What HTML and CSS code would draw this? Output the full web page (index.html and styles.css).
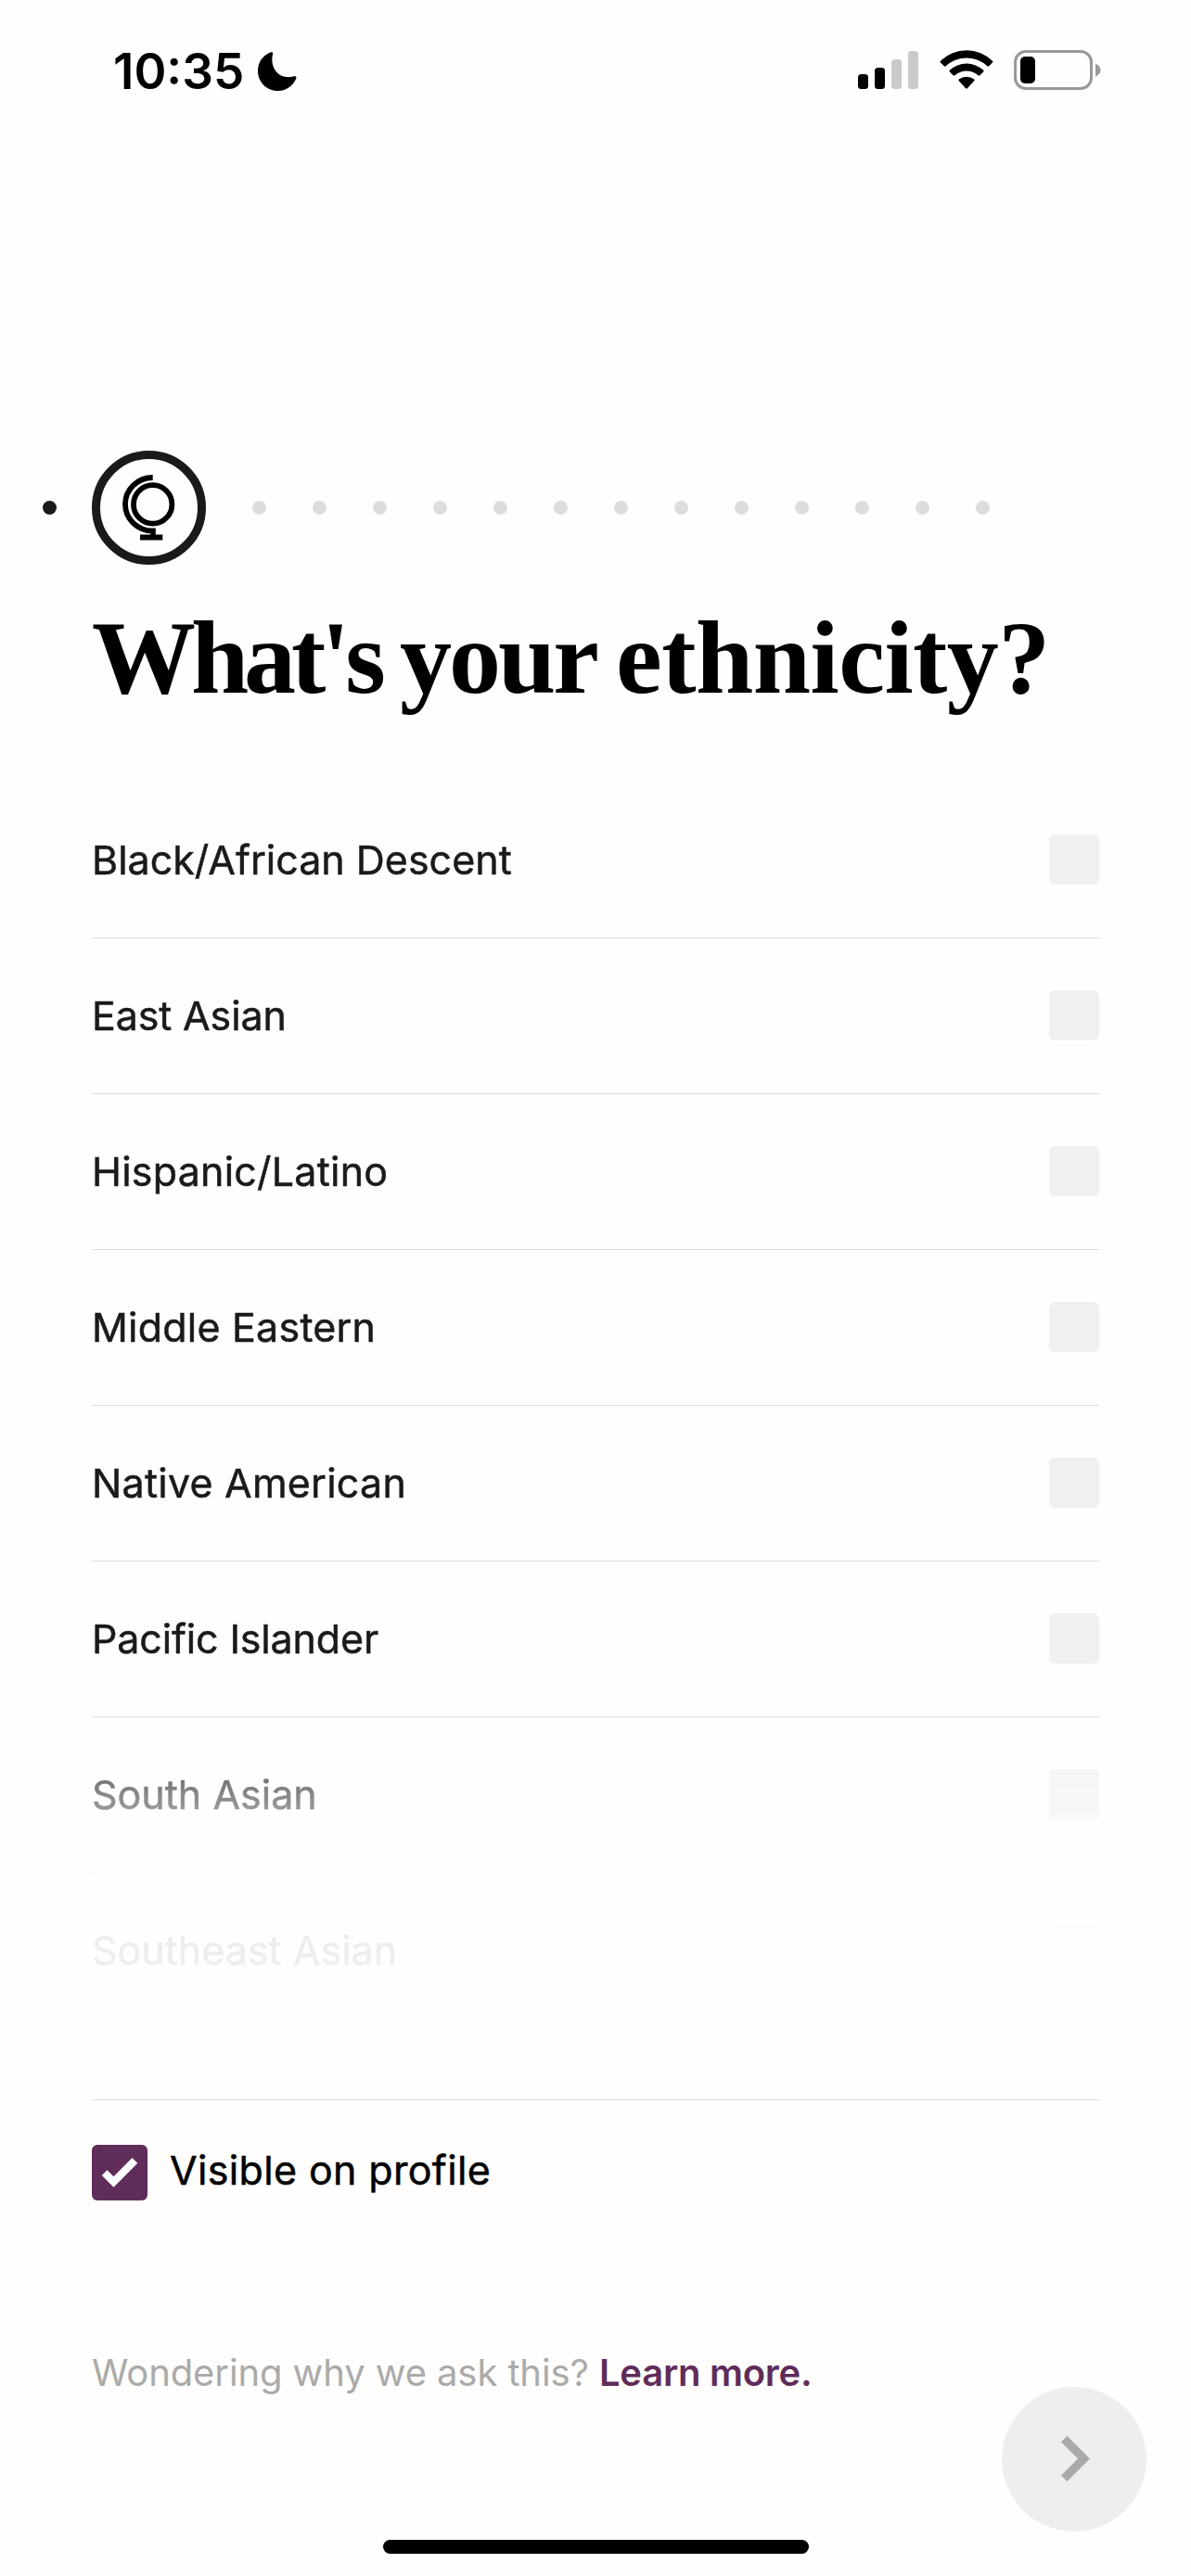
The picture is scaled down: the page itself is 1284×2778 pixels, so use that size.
FILE: index.html
```
<!DOCTYPE html>
<html lang="en">
<head>
<meta charset="utf-8">
<title>What's your ethnicity?</title>
<link rel="stylesheet" href="styles.css">
</head>
<body>
<div class="screen">
  <header class="status">
    <div class="clock">
      <span class="time">10:35</span>
      <svg class="moon" width="42" height="42" viewBox="0 0 42 42"><path d="M13.5 0.5C15.5-.3 16.600.6 16 2.500C13 15 20 27.200 33 27.200C35.500 27.200 37 26.800 39 26.300C41 25.900 42 27 41 29.200C37.500 37 30 42 21.500 42C9.500 42 0 32.500 0 20.500C0 11.500 5 3.800 13.500.5Z"/></svg>
    </div>
    <div class="indicators">
      <svg class="signal" width="65" height="41" viewBox="0 0 65 41"><rect y="25" width="11" height="16" rx="3.500"/><rect x="18" y="18" width="11" height="23" rx="3.500"/><g fill="#cbcac9"><rect x="36" y="9" width="11" height="32" rx="3.500"/><rect x="54" width="11" height="41" rx="3.500"/></g></svg>
      <svg class="wifi" width="58" height="42" viewBox="0 0 58 42"><path d="M1 11.800A39.500 39.500 0 0 1 57 11.800Q57.800 12.700 57 13.500L53.200 17.300Q52.300 18 51.400 17.300A32.600 32.600 0 0 0 6.600 17.300Q5.700 18 4.800 17.300L1 13.500Q.2 12.700 1 11.800Z"/><path d="M10.800 21.800A26.500 26.500 0 0 1 47.200 21.800Q48 22.700 47.200 23.500L43.300 27.300Q42.500 28 41.600 27.300A19 19 0 0 0 16.400 27.300Q15.500 28 14.700 27.300L10.800 23.500Q10 22.700 10.800 21.800Z"/><path d="M20.700 31.600A13.500 13.500 0 0 1 37.300 31.600Q38 32.500 37.200 33.300L29.900 41.200Q29 42 28.100 41.200L20.800 33.300Q20 32.500 20.700 31.600Z"/></svg>
      <svg class="battery" width="95" height="43" viewBox="0 0 95 43"><rect x="1.500" y="1.500" width="82" height="40" rx="11.500" fill="none" stroke="#999" stroke-width="3"/><rect x="7" y="7" width="16" height="29" rx="5"/><path d="M88 14.500Q93.500 17 93.500 21.500T88 28.500Z" fill="#999"/></svg>
    </div>
  </header>

  <nav class="steps">
    <i class="dot done"></i>
    <span class="current"><svg width="58" height="74" viewBox="0 0 58 74" fill="none" stroke="#000" stroke-width="5.800"><circle cx="32.700" cy="32.900" r="20.700"/><path d="M32.700 4A29.700 28.800 0 0 0 32.700 61.600M32.900 58.500V68M19 68.500H43.300"/></svg></span>
    <i class="dot"></i><i class="dot"></i><i class="dot"></i><i class="dot"></i><i class="dot"></i><i class="dot"></i><i class="dot"></i><i class="dot"></i><i class="dot"></i><i class="dot"></i><i class="dot"></i><i class="dot"></i><i class="dot"></i>
  </nav>

  <h1 class="title"><span class="what">What's</span> <span class="your">your</span> <span class="ethnicity">ethnicity?</span></h1>

  <ul class="options">
    <li class="option"><span>Black/African Descent</span><i class="box"></i></li>
    <li class="option"><span class="tight">East Asian</span><i class="box"></i></li>
    <li class="option"><span class="loose">Hispanic/Latino</span><i class="box"></i></li>
    <li class="option"><span class="loose">Middle Eastern</span><i class="box"></i></li>
    <li class="option"><span class="loose">Native American</span><i class="box"></i></li>
    <li class="option"><span class="tight">Pacific Islander</span><i class="box"></i></li>
    <li class="option"><span>South Asian</span><i class="box"></i></li>
    <li class="option"><span>Southeast Asian</span><i class="box"></i></li>
  </ul>

  <div class="visibility">
    <span class="checked"><svg width="40" height="32" viewBox="0 0 40 32"><path d="M0.800 19L6.500 13.200L13.500 20.200L33.500 0L39.300 5.800L13.500 31.800Z" fill="#fff"/></svg></span>
    <span class="visible">Visible on profile</span>
  </div>

  <footer class="footer">
    <p class="why"><span class="ask">Wondering why we ask this?</span><a class="more">Learn more.</a></p>
    <span class="next"><svg width="32" height="50" viewBox="0 0 32 50"><path d="M0 6.500L6.500 0L31 24.500L6.500 49L0 42.500L18 24.500Z" fill="#aaa"/></svg></span>
  </footer>
  <div class="home"></div>
</div>
</body>
</html>
```
FILE: styles.css
```
* { box-sizing: border-box; margin: 0; padding: 0; }
body { background: #fffefc; color: #1a1a1a; font-family: Inter, "Liberation Sans", sans-serif; }
svg { display: block; flex: none; }
.screen { width: 1284px; height: 2778px; display: flex; flex-direction: column; overflow: hidden; }

.status { height: 486px; padding: 47px 96px 0 122px; display: flex; justify-content: space-between; align-items: flex-start; color: #000; }
.clock { display: flex; align-items: flex-start; }
.time { font-size: 53px; line-height: 60px; font-weight: 600; width: 156px; white-space: nowrap; }
.moon { margin-top: 9px; }
.indicators { display: flex; align-items: flex-start; padding-top: 7px; }
.signal { margin-top: 1px; }
.wifi { margin-left: 23px; }
.battery { margin-left: 22px; }

.steps { height: 123px; padding-left: 46px; display: flex; align-items: center; gap: 50px; }
.dot { width: 15px; height: 15px; border-radius: 50%; background: #ddd; flex: none; }
.done { background: #1a1a1a; margin-right: -12px; }
.current { width: 123px; height: 123px; border: 9px solid #1a1a1a; border-radius: 50%; flex: none; padding: 16px 0 0 24px; }

.title { height: 257px; padding: 38px 0 0 99px; display: flex; font: 700 112px/124px "Liberation Serif", serif; white-space: nowrap; color: #000; }
.what { width: 332px; letter-spacing: -5.1px; }
.your { width: 233px; letter-spacing: -3px; }
.ethnicity { letter-spacing: -0.5px; }

.options { list-style: none; margin: 0 99px; height: 1314px; overflow: hidden; background: #fefefe; -webkit-mask-image: linear-gradient(#000 974px, rgba(0,0,0,.45) 1084px, rgba(0,0,0,.09) 1160px, rgba(0,0,0,.07) 1254px, transparent 1314px); mask-image: linear-gradient(#000 974px, rgba(0,0,0,.45) 1084px, rgba(0,0,0,.09) 1160px, rgba(0,0,0,.07) 1254px, transparent 1314px); }
.option { height: 168px; padding-bottom: 1px; display: flex; justify-content: space-between; align-items: center; border-bottom: 1px solid #ddd; font-size: 43px; white-space: nowrap; -webkit-text-stroke: .5px; }
.option:first-child { height: 146px; padding-bottom: 23px; }
.tight { letter-spacing: -.15px; }
.loose { letter-spacing: .22px; }
.box { width: 54px; height: 54px; border-radius: 6px; background: #f0f0f0; }

.visibility { margin: 84px 99px 0; height: 246px; border-top: 1px solid #ddd; padding-top: 48px; display: flex; align-items: flex-start; color: #000; font-size: 43px; line-height: 54px; }
.checked { width: 60px; height: 60px; border-radius: 6px; background: #602c5a; padding: 14px 0 0 10px; margin-right: 24px; }
.visible { letter-spacing: .35px; -webkit-text-stroke: .5px; }

.footer { height: 229px; padding: 0 48px 0 99px; display: flex; justify-content: space-between; font-size: 40px; line-height: 50px; }
.why { padding-top: 24px; display: flex; white-space: nowrap; }
.ask { width: 547px; color: #aaa; letter-spacing: -.1px; }
.more { color: #602c5a; font-weight: 600; letter-spacing: -.25px; }
.next { width: 156px; height: 156px; margin-top: 64px; border-radius: 50%; background: #eee; padding: 53px 0 0 64px; }
.home { width: 459px; height: 15px; margin-left: 413px; border-radius: 8px; background: #000; flex: none; }
```
